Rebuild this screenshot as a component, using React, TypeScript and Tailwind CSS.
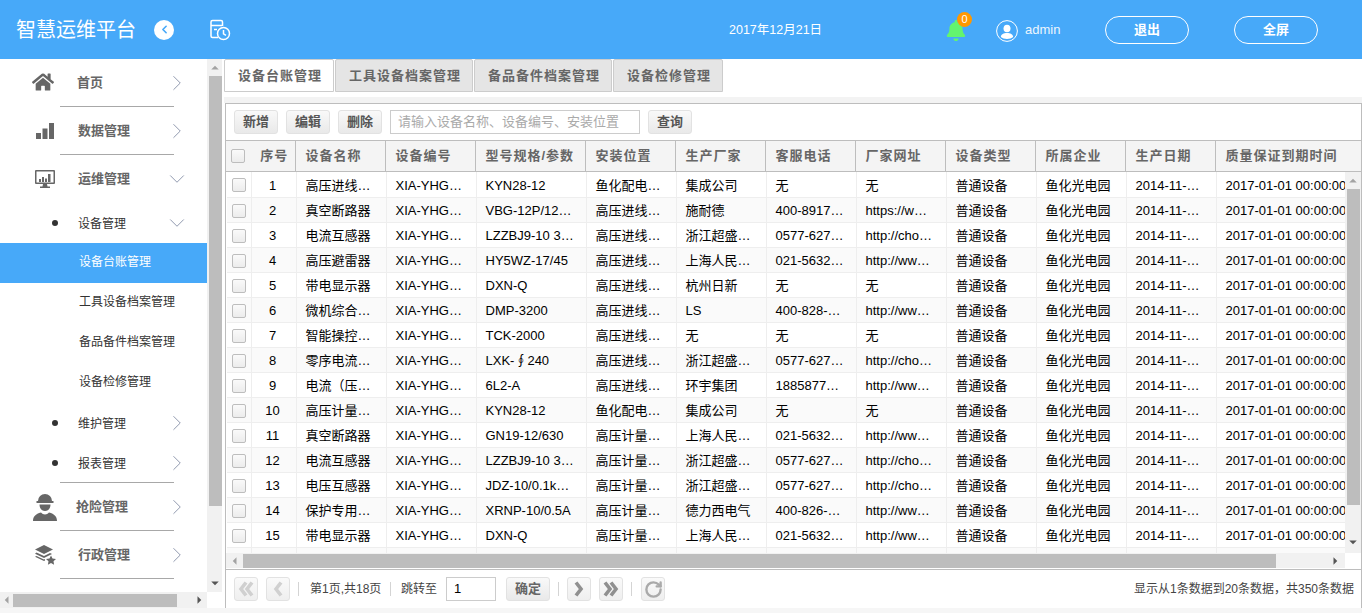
import { ChevronDown, ChevronLeft, ChevronRight, RotateCw } from 'lucide-react';
import { FaBell, FaHome } from 'react-icons/fa';

const colClasses = ['w-[24px]', 'w-[45px]', 'w-[90px]', 'w-[90px]', 'w-[110px]', 'w-[90px]', 'w-[90px]', 'w-[90px]', 'w-[90px]', 'w-[90px]', 'w-[90px]', 'w-[90px]', 'w-[130px]'];

const heads = ['序号', '设备名称', '设备编号', '型号规格/参数', '安装位置', '生产厂家', '客服电话', '厂家网址', '设备类型', '所属企业', '生产日期', '质量保证到期时间'];

const rows = [
  ['高压进线…', 'KYN28-12', '鱼化配电…', '集成公司', '无', '无'],
  ['真空断路器', 'VBG-12P/12…', '高压进线…', '施耐德', '400-8917…', 'https://w…'],
  ['电流互感器', 'LZZBJ9-10 3…', '高压进线…', '浙江超盛…', '0577-627…', 'http://cho…'],
  ['高压避雷器', 'HY5WZ-17/45', '高压进线…', '上海人民…', '021-5632…', 'http://ww…'],
  ['带电显示器', 'DXN-Q', '高压进线…', '杭州日新', '无', '无'],
  ['微机综合…', 'DMP-3200', '高压进线…', 'LS', '400-828-…', 'http://ww…'],
  ['智能操控…', 'TCK-2000', '高压进线…', '无', '无', '无'],
  ['零序电流…', 'LXK-∮240', '高压进线…', '浙江超盛…', '0577-627…', 'http://cho…'],
  ['电流（压…', '6L2-A', '高压进线…', '环宇集团', '1885877…', 'http://ww…'],
  ['高压计量…', 'KYN28-12', '鱼化配电…', '集成公司', '无', '无'],
  ['真空断路器', 'GN19-12/630', '高压计量…', '上海人民…', '021-5632…', 'http://ww…'],
  ['电流互感器', 'LZZBJ9-10 3…', '高压计量…', '浙江超盛…', '0577-627…', 'http://cho…'],
  ['电压互感器', 'JDZ-10/0.1k…', '高压计量…', '浙江超盛…', '0577-627…', 'http://cho…'],
  ['保护专用…', 'XRNP-10/0.5A', '高压计量…', '德力西电气', '400-826-…', 'http://ww…'],
  ['带电显示器', 'DXN-Q', '高压计量…', '上海人民…', '021-5632…', 'http://ww…'],
  ['', '', '', '', '', ''],
];

function Arrow({ dir, className = '' }: { dir: 'up' | 'down' | 'left' | 'right'; className?: string }) {
  const points = {
    up: '0,6 10,6 5,1',
    down: '0,2 10,2 5,7',
    left: '6,0 6,10 1,5',
    right: '2,0 2,10 7,5',
  }[dir];
  const horizontal = dir === 'left' || dir === 'right';
  return (
    <svg viewBox={horizontal ? '0 0 8 10' : '0 0 10 8'} className={`${horizontal ? 'w-[6px] h-[8px]' : 'w-[8px] h-[6px]'} ${className}`} fill="currentColor">
      <polygon points={points} />
    </svg>
  );
}

function Checkbox() {
  return <span className="block w-[14px] h-[14px] rounded-[2px] border border-[#bdbdbd] bg-gradient-to-b from-[#fafafa] to-[#ececec]" />;
}

function ToolButton({ label }: { label: string }) {
  return (
    <button className="w-[44px] h-[24px] rounded-[3px] border border-[#e2e2e2] bg-gradient-to-b from-[#f9f9f9] to-[#e9e9e9] text-[13px] font-bold text-[#555]">
      {label}
    </button>
  );
}

function PagerButton({ children }: { children: React.ReactNode }) {
  return (
    <span className="w-[24px] h-[24px] flex items-center justify-center rounded-[3px] border border-[#e2e2e2] bg-gradient-to-b from-[#fafafa] to-[#efefef]">
      {children}
    </span>
  );
}

// heavy pager chevrons, d is the stroke path in a 20x20 box
function PagerChevron({ d, color }: { d: string; color: string }) {
  return (
    <svg viewBox="0 0 20 20" className="w-[20px] h-[20px]" fill="none" stroke={color} strokeWidth="3.6" strokeLinejoin="miter">
      <path d={d} />
    </svg>
  );
}

function Sep() {
  return <span className="block w-px h-[14px] bg-[#d4d4d4]" />;
}

function HistoryIcon() {
  return (
    <svg viewBox="0 0 22 22" className="w-[22px] h-[22px]" fill="none" stroke="white" strokeWidth="1.5">
      <path d="M9 18.500H3.500a1.500 1.500 0 0 1-1.500-1.500V3A1.500 1.500 0 0 1 3.500 1.500h8.500A1.500 1.500 0 0 1 13.500 3v4" />
      <path d="M2 6.500h11M5 10.500h3" />
      <circle cx="14.500" cy="14.500" r="6" />
      <path d="M14.500 11v3.800l2.500 1.500" />
    </svg>
  );
}

function UserIcon() {
  return (
    <svg viewBox="0 0 22 22" className="w-[22px] h-[22px]">
      <circle cx="11" cy="11" r="10.400" fill="none" stroke="white" strokeWidth="1" />
      <ellipse cx="11" cy="8.500" rx="3.500" ry="3.800" fill="white" />
      <path d="M4.800 17c.4-3 2.800-4 6.200-4s5.800 1 6.200 4c-1.500 1.300-3.700 2-6.200 2s-4.700-.7-6.200-2z" fill="white" />
    </svg>
  );
}

function BarsIcon() {
  return (
    <svg viewBox="0 0 18 17" className="w-[18px] h-[17px]" fill="#666">
      <rect x="0" y="10" width="5" height="6" />
      <rect x="6.500" y="5.500" width="5" height="10.500" />
      <rect x="13" y="0" width="5" height="16" />
    </svg>
  );
}

function MonitorIcon() {
  return (
    <svg viewBox="0 0 20 18" className="w-[20px] h-[18px]">
      <path fillRule="evenodd" fill="#666" d="M1 0h18a1 1 0 0 1 1 1v12a1 1 0 0 1-1 1H1a1 1 0 0 1-1-1V1a1 1 0 0 1 1-1zm.5 1.500v11h17v-11z" />
      <path fill="#666" d="M8 14h4l.5 2.500H15V18H5v-1.500h2.500zM4 9h2v3H4zM7 7h2v5H7zM10 8.500h2V12h-2zM13 4h2.500v8H13z" />
    </svg>
  );
}

function WorkerIcon() {
  return (
    <svg viewBox="0 0 24 28" className="w-[24px] h-[28px] shrink-0" fill="#666">
      <path d="M5 8a7 7 0 0 1 14 0h1.500v2h-17V8z" />
      <path d="M6.500 11.500h11c0 4-2.300 6.500-5.500 6.500s-5.500-2.500-5.500-6.500z" />
      <path d="M0 28c0-4.500 2.500-7 8-8.500 1 1.300 2.500 2 4 2s3-.7 4-2c5.500 1.500 8 4 8 8.500z" />
    </svg>
  );
}

function LayersIcon() {
  return (
    <svg viewBox="0 0 21 20" className="w-[21px] h-[20px]" fill="#666">
      <path d="M9 0l9 4.500-9 4.500-9-4.500z" />
      <path d="M1.500 7.500L9 11l6-3 2 1-8 4-9-4.200z" />
      <path d="M1.500 11L9 14.500l1-.5v1.600l-1 .4-9-4.200z" />
      <path d="M16 10.500l1.500 3 3.500.5-2.500 2.300.6 3.400-3.100-1.600-3.100 1.600.6-3.400L11 14l3.500-.5z" />
    </svg>
  );
}

function Chevron({ open }: { open?: boolean }) {
  return open ? (
    <ChevronDown className="w-[26px] h-[26px] mr-[17px] shrink-0 text-[#8e97ad]" strokeWidth={0.9} />
  ) : (
    <ChevronRight className="w-[26px] h-[26px] mr-[17px] shrink-0 text-[#8e97ad]" strokeWidth={0.9} />
  );
}

function NavItem({ icon, label, open, textClass = '' }: { icon: React.ReactNode; label: string; open?: boolean; textClass?: string }) {
  return (
    <div className="h-[48px] flex items-center">
      <span className="w-[78px] pl-[32px] pr-[20px] h-[28px] shrink-0 flex items-center justify-center">{icon}</span>
      <span className={`flex-1 text-[13px] font-bold text-[#666] pb-[1px] ${textClass}`}>{label}</span>
      <Chevron open={open} />
    </div>
  );
}

function Divider() {
  return <div className="h-px w-[114px] ml-[60px] -mt-[1px] bg-[#a8a8a8]" />;
}

function SubGroup({ label, open }: { label: string; open?: boolean }) {
  return (
    <div className="h-[40px] flex items-center">
      <span className="w-[6px] h-[6px] rounded-full bg-[#333] ml-[52px] mr-[20px] shrink-0" />
      <span className="flex-1 text-[12px] text-[#333] pt-[2px]">{label}</span>
      <Chevron open={open} />
    </div>
  );
}

function SubLeaf({ label, active }: { label: string; active?: boolean }) {
  return (
    <div className={`h-[40px] pl-[79px] pb-[2px] flex items-center text-[12px] ${active ? 'bg-[#47a9f9] text-white' : 'text-[#333]'}`}>
      {label}
    </div>
  );
}

function Sidebar() {
  return (
    <aside className="w-[222px] shrink-0 flex flex-col bg-white">
      <div className="flex h-[533px]">
        <nav className="w-[207px] overflow-hidden">
          <NavItem icon={<FaHome className="w-[22px] h-[22px] text-[#666] shrink-0 -mt-[2px] -ml-[4px]" />} label="首页" textClass="-ml-[1px]" />
          <Divider />
          <NavItem icon={<BarsIcon />} label="数据管理" />
          <Divider />
          <NavItem icon={<MonitorIcon />} label="运维管理" open />
          <SubGroup label="设备管理" open />
          <SubLeaf label="设备台账管理" active />
          <SubLeaf label="工具设备档案管理" />
          <SubLeaf label="备品备件档案管理" />
          <SubLeaf label="设备检修管理" />
          <SubGroup label="维护管理" />
          <SubGroup label="报表管理" />
          <Divider />
          <NavItem icon={<WorkerIcon />} label="抢险管理" textClass="-ml-[2px]" />
          <Divider />
          <NavItem icon={<LayersIcon />} label="行政管理" />
          <Divider />
        </nav>
        <div className="w-[15px] bg-[#f1f1f1] flex flex-col items-end text-[#a3a3a3]">
          <div className="h-[17px] w-full flex items-center justify-center"><Arrow dir="up" /></div>
          <div className="w-[13px] h-[430px] bg-[#bdbdbd]" />
          <div className="flex-1 w-full flex items-end justify-center pb-[6px] text-[#555]"><Arrow dir="down" /></div>
        </div>
      </div>
      <div className="h-[16px] flex">
        <div className="w-[207px] bg-[#f1f1f1] flex items-center">
          <div className="w-[13px] flex justify-center text-[#a3a3a3]"><Arrow dir="left" /></div>
          <div className="w-[164px] h-[13px] bg-[#bdbdbd]" />
          <div className="flex-1 flex justify-end pr-[5px] text-[#555]"><Arrow dir="right" /></div>
        </div>
      </div>
    </aside>
  );
}

function Tabs() {
  const tabs = [
    { label: '工具设备档案管理', width: 'w-[138px]' },
    { label: '备品备件档案管理', width: 'w-[138px]' },
    { label: '设备检修管理', width: 'w-[110px]' },
  ];
  return (
    <div className="h-[33px] flex gap-[1px] pl-[2px]">
      <div className="w-[110px] border border-[#ccc] rounded-t-[2px] bg-white flex items-center justify-center pl-[2px] text-[13px] font-bold tracking-[1px] text-[#666]">
        设备台账管理
      </div>
      {tabs.map((t) => (
        <div key={t.label} className={`${t.width} border border-[#ccc] rounded-t-[2px] bg-[#e5e5e5] flex items-center justify-center pl-[2px] text-[13px] font-bold tracking-[1px] text-[#666]`}>
          {t.label}
        </div>
      ))}
    </div>
  );
}

function Colgroup({ last }: { last?: string }) {
  return (
    <colgroup>
      {colClasses.map((c, i) => (
        <col key={i} className={i === colClasses.length - 1 && last ? last : c} />
      ))}
    </colgroup>
  );
}

function DataTable() {
  return (
    <div className="flex-1 min-h-0 flex flex-col">
      <table className="table-fixed w-[1135px] h-[32px] shrink-0 bg-[#f4f4f4] border-t border-b border-[#bdbdbd]">
        <Colgroup last="w-[146px]" />
        <thead>
          <tr className="h-[30px]">
            <th className="pl-[5px] font-normal">
              <Checkbox />
            </th>
            {heads.map((h, i) => (
              <th
                key={h}
                className={`text-[13px] font-bold text-[#666] tracking-[1px] whitespace-nowrap overflow-hidden ${i === 0 ? 'text-center pl-[4px]' : 'text-left pl-[10px]'} ${i === heads.length - 1 ? '' : 'border-r border-[#bdbdbd]'}`}
              >
                {h}
              </th>
            ))}
          </tr>
        </thead>
      </table>
      <div className="flex h-[381px] shrink-0">
        <div className="w-[1119px] overflow-hidden pl-[1px]">
          <table className="table-fixed w-[1119px]">
            <Colgroup last="w-[130px]" />
            <tbody>
              {rows.map((r, i) => (
                <tr key={i} className={`h-[25px] border-b border-[#eee] text-[13px] text-black [&>td]:pt-[2px] ${i % 2 === 1 ? 'bg-[#fafafa]' : 'bg-white'}`}>
                  <td className="border-r border-[#eee] pl-[5px]">
                    {r[0] && <Checkbox />}
                  </td>
                  <td className="border-r border-[#eee] text-center pr-[2px]">{r[0] && i + 1}</td>
                  <td className="border-r border-[#eee] pl-[9px] whitespace-nowrap overflow-hidden">{r[0]}</td>
                  <td className="border-r border-[#eee] pl-[9px] whitespace-nowrap overflow-hidden">{r[0] && 'XIA-YHG…'}</td>
                  <td className="border-r border-[#eee] pl-[9px] whitespace-nowrap overflow-hidden">{r[1]}</td>
                  <td className="border-r border-[#eee] pl-[9px] whitespace-nowrap overflow-hidden">{r[2]}</td>
                  <td className="border-r border-[#eee] pl-[9px] whitespace-nowrap overflow-hidden">{r[3]}</td>
                  <td className="border-r border-[#eee] pl-[9px] whitespace-nowrap overflow-hidden">{r[4]}</td>
                  <td className="border-r border-[#eee] pl-[9px] whitespace-nowrap overflow-hidden">{r[5]}</td>
                  <td className="border-r border-[#eee] pl-[9px] whitespace-nowrap overflow-hidden">{r[0] && '普通设备'}</td>
                  <td className="border-r border-[#eee] pl-[9px] whitespace-nowrap overflow-hidden">{r[0] && '鱼化光电园'}</td>
                  <td className="border-r border-[#eee] pl-[9px] whitespace-nowrap overflow-hidden">{r[0] && '2014-11-…'}</td>
                  <td className="pl-[9px] whitespace-nowrap overflow-hidden">{r[0] && '2017-01-01 00:00:00'}</td>
                </tr>
              ))}
            </tbody>
          </table>
        </div>
        <div className="w-[16px] bg-[#f1f1f1] flex flex-col items-center">
          <div className="h-[17px] flex items-center text-[#a3a3a3]"><Arrow dir="up" /></div>
          <div className="w-[13px] h-[316px] bg-[#bdbdbd]" />
          <div className="flex-1 flex items-end pb-[8px] text-[#555]"><Arrow dir="down" /></div>
        </div>
      </div>
      <div className="h-[15px] shrink-0 flex">
        <div className="w-[1119px] bg-[#f1f1f1] flex items-center">
          <div className="w-[17px] flex justify-center text-[#a3a3a3]"><Arrow dir="left" /></div>
          <div className="w-[1033px] h-[14px] bg-[#bdbdbd]" />
          <div className="flex-1 flex justify-end pr-[7px] text-[#555]"><Arrow dir="right" /></div>
        </div>
      </div>
    </div>
  );
}

function Pager() {
  return (
    <div className="h-[39px] shrink-0 border-t border-[#bdbdbd] flex items-center pl-[8px] pr-[7px] text-[12px] text-[#333]">
      <div className="flex gap-[8px]">
        <PagerButton><PagerChevron d="M10 3.500L5 10l5 6.500M16 3.500L11 10l5 6.500" color="#d0d0d0" /></PagerButton>
        <PagerButton><PagerChevron d="M13 3.500L8 10l5 6.500" color="#d0d0d0" /></PagerButton>
      </div>
      <span className="ml-[8px] mr-[11px]"><Sep /></span>
      <span className="text-[#444] w-[73px] whitespace-nowrap">第1页,共18页</span>
      <span className="ml-[7px] mr-[10px]"><Sep /></span>
      <span className="text-[#444] w-[36px] whitespace-nowrap">跳转至</span>
      <span className="ml-[9px] w-[50px] h-[24px] border border-[#ccc] bg-white flex items-center pl-[7px] text-[13px] text-black">1</span>
      <button className="ml-[10px] w-[44px] h-[24px] rounded-[3px] border border-[#e2e2e2] bg-gradient-to-b from-[#f9f9f9] to-[#e9e9e9] text-[13px] font-bold text-[#666]">确定</button>
      <span className="ml-[8px] mr-[8px]"><Sep /></span>
      <div className="flex gap-[8px]">
        <PagerButton><PagerChevron d="M7 3.500L12 10l-5 6.500" color="#909090" /></PagerButton>
        <PagerButton><PagerChevron d="M4 3.500L9 10l-5 6.500M10 3.500L15 10l-5 6.500" color="#909090" /></PagerButton>
      </div>
      <span className="ml-[8px] mr-[9px]"><Sep /></span>
      <PagerButton><RotateCw className="w-[19px] h-[19px] text-[#aaa]" strokeWidth={3} /></PagerButton>
      <span className="ml-auto text-[#444]">显示从1条数据到20条数据，共350条数据</span>
    </div>
  );
}

export default function App() {
  return (
    <div className="w-[1362px] h-[613px] overflow-hidden flex flex-col bg-white [font-family:Liberation_Sans,Noto_Sans_CJK_SC,sans-serif]">
      <header className="h-[59px] shrink-0 bg-[#47a9f9] flex items-center text-white">
        <span className="ml-[16px] w-[120px] text-[20px] whitespace-nowrap">智慧运维平台</span>
        <span className="ml-[18px] w-[20px] h-[20px] rounded-full bg-white flex items-center justify-center">
          <ChevronLeft className="w-[13px] h-[13px] text-[#47a9f9]" strokeWidth={3} />
        </span>
        <span className="ml-[35px] mt-[1px]"><HistoryIcon /></span>
        <span className="ml-[498px] w-[95px] text-[12.500px] whitespace-nowrap mt-[1px]">2017年12月21日</span>
        <span className="ml-[122px] relative w-[20px] h-[20px]">
          <FaBell className="w-[20px] h-[21px] text-[#63f56e]" />
          <span className="absolute left-[11px] -top-[8px] w-[15px] h-[15px] rounded-full bg-[#ff9800] flex items-center justify-center text-[11px]">0</span>
        </span>
        <span className="ml-[30px] mt-[3px]"><UserIcon /></span>
        <span className="ml-[7px] w-[36px] text-[13px] opacity-90 mt-[1px]">admin</span>
        <button className="ml-[44px] w-[84px] h-[28px] rounded-full border border-white text-[13px] font-bold">退出</button>
        <button className="ml-[45px] w-[84px] h-[28px] rounded-full border border-white text-[13px] font-bold">全屏</button>
      </header>
      <div className="h-[549px] flex">
        <Sidebar />
        <main className="flex-1 min-w-0 flex flex-col">
          <Tabs />
          <div className="h-[5px] shrink-0" />
          <div className="h-[6px] shrink-0 ml-[2px] bg-[#f3f3f3]" />
          <section className="h-[505px] ml-[3px] border-t border-l border-r border-[#bdbdbd] flex flex-col">
            <div className="h-[36px] shrink-0 flex items-center pl-[8px] gap-[8px]">
              <ToolButton label="新增" />
              <ToolButton label="编辑" />
              <ToolButton label="删除" />
              <span className="w-[250px] h-[24px] border border-[#ccc] bg-white flex items-center pl-[7px] text-[13px] text-[#aaa] whitespace-nowrap">
                请输入设备名称、设备编号、安装位置
              </span>
              <ToolButton label="查询" />
            </div>
            <DataTable />
            <Pager />
          </section>
        </main>
      </div>
      <div className="h-[5px] shrink-0 bg-[#f6f6f6]" />
    </div>
  );
}
